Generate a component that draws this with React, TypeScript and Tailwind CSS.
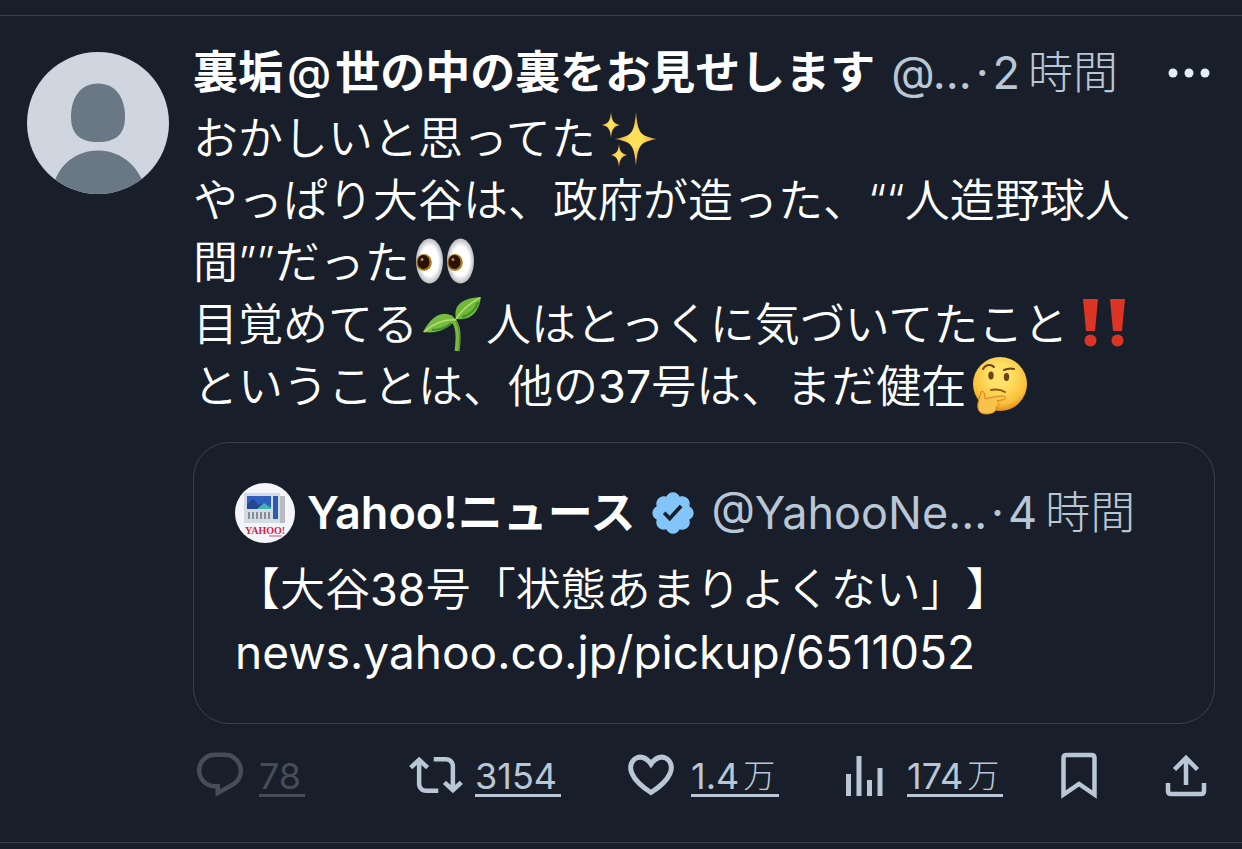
import type { ReactNode } from "react"

type Action = {
  label: string
  icon: ReactNode
  count?: string
  unit?: string
  disabled?: boolean
}

function DefaultAvatar() {
  return (
    <svg viewBox="0 0 142 142" className="w-[142px] h-[142px] shrink-0 rounded-full" role="img" aria-label="プロフィール画像">
      <rect width="142" height="142" fill="#cfd6df" />
      <path d="M71 31.500c18 0 27 14.500 27 33.500 0 18-10 25-27 25s-27-7-27-25c0-19 9-33.500 27-33.500z" fill="#6a7784" />
      <path d="M25 142c2-26 22-43.500 46-43.500s44 17.500 48 43.500z" fill="#6a7784" />
    </svg>
  )
}

function YahooAvatar() {
  return (
    <svg viewBox="0 0 60 60" className="w-[60px] h-[60px] shrink-0 rounded-full" role="img" aria-label="Yahoo!ニュース">
      <rect width="60" height="60" fill="#f4f5f8" />
      <path d="M43 13h7v27h-7z" fill="#b9bbc0" />
      <path d="M9 10h36v30H9z" fill="#d5dbe2" />
      <path d="M12 13h24v13H12z" fill="#2f5fc0" />
      <path d="M12 26v-5l6-5 6 6 3-2v6z" fill="#24488f" />
      <path d="M22 26l7-6 7 5v1z" fill="#3fb5b0" />
      <path d="M38 13h5v23h-5z" fill="#2c5cae" />
      <path d="M14 29v7M18 29v7M22 29v7M26 29v7M30 29v7M34 29v7" stroke="#8b8f98" strokeWidth="2" />
      <text x="30" y="51" textAnchor="middle" fontSize="10" fontWeight="700" fontFamily="Liberation Serif, serif" fill="#cf2547">
        YAHOO!
      </text>
      <path d="M34 53h13" stroke="#dc8797" strokeWidth="1.500" />
    </svg>
  )
}

function VerifiedBadge() {
  return (
    <svg viewBox="1 1 20 20" className="w-11 h-11 shrink-0" role="img" aria-label="認証済みアカウント">
      <path
        fill="#83c5f8"
        d="M20.396 11c-.018-.646-.215-1.275-.57-1.816-.354-.54-.852-.972-1.438-1.246.223-.607.27-1.264.14-1.897-.131-.634-.437-1.218-.882-1.687-.47-.445-1.053-.75-1.687-.882-.633-.13-1.29-.083-1.897.14-.273-.587-.704-1.086-1.245-1.44S11.647 1.62 11 1.604c-.646.017-1.273.213-1.813.568s-.969.854-1.24 1.44c-.608-.223-1.267-.272-1.902-.14-.635.13-1.22.436-1.69.882-.445.47-.749 1.055-.878 1.688-.13.633-.08 1.29.144 1.896-.587.274-1.087.705-1.443 1.245-.356.54-.555 1.17-.574 1.817.02.647.218 1.276.574 1.817.356.54.856.972 1.443 1.245-.224.606-.274 1.263-.144 1.896.13.634.433 1.218.877 1.688.47.443 1.054.747 1.687.878.633.132 1.29.084 1.897-.136.274.586.705 1.084 1.246 1.439.54.354 1.17.551 1.816.569.647-.016 1.276-.213 1.817-.567s.972-.854 1.245-1.44c.604.239 1.266.296 1.903.164.636-.132 1.22-.447 1.68-.907.46-.46.776-1.044.908-1.681s.075-1.299-.165-1.903c.586-.274 1.084-.705 1.439-1.246.354-.54.551-1.17.569-1.816z"
      />
      <path d="M7 10.900l2.500 2.600 5.200-5.700" fill="none" stroke="#181f2a" strokeWidth="1.700" />
    </svg>
  )
}

function Sparkles() {
  return (
    <svg viewBox="0 0 60 60" className="inline-block w-[60px] h-[60px] ml-1 -mt-4 -mb-1 align-middle" role="img" aria-label="✨">
      <defs>
        <radialGradient id="spark">
          <stop offset="0.3" stopColor="#fddf5a" />
          <stop offset="0.65" stopColor="#f3bd4c" />
          <stop offset="1" stopColor="#d9803f" />
        </radialGradient>
      </defs>
      <g fill="url(#spark)">
        <path d="M36 5c2 20 3 24 21 27-18 3-19 7-21 27-2-20-3-24-21-27 18-3 19-7 21-27z" />
        <path d="M11 5c1 9 2 11 9 13-7 2-8 4-9 13-1-9-2-11-9-13 7-2 8-4 9-13z" />
        <path d="M19 37c1 8 2 9 8 11-6 2-7 4-8 12-1-8-2-10-8-12 6-2 7-3 8-11z" />
      </g>
    </svg>
  )
}

function Eyes() {
  return (
    <svg viewBox="0 0 60 60" className="inline-block w-[60px] h-[60px] ml-1 -mt-4 -mb-1 align-middle" role="img" aria-label="👀">
      <defs>
        <radialGradient id="eyeball">
          <stop offset="0.65" stopColor="#ffffff" />
          <stop offset="1" stopColor="#b9babd" />
        </radialGradient>
      </defs>
      {[0, 31].map((x) => (
        <g key={x} transform={`translate(${x} 0)`}>
          <ellipse cx="15.500" cy="30" rx="13.500" ry="22.500" fill="url(#eyeball)" />
          <ellipse cx="10" cy="31.500" rx="7.800" ry="8.500" fill="#a97a1d" />
          <ellipse cx="9.500" cy="31" rx="6" ry="7" fill="#2b1207" />
          <circle cx="8" cy="28.500" r="1.500" fill="#a08e80" />
        </g>
      ))}
    </svg>
  )
}

function Seedling() {
  return (
    <svg viewBox="0 0 60 60" className="inline-block w-[60px] h-[60px] mx-1 -mt-4 -mb-1 align-middle" role="img" aria-label="🌱">
      <path d="M31 27c5 5 6 17 4 31" fill="none" stroke="#7fb63e" strokeWidth="5" />
      <path d="M33.500 28c4 7 5 17 3 30" fill="none" stroke="#4d8f2e" strokeWidth="1" />
      <path d="M34 26c-3-13 5-21 25-22-2 15-10 24-25 22z" fill="#6fb83a" />
      <path d="M34 27C27 17 12 18 1 39c15 2 24-3 33-12z" fill="#78bb3f" />
      <path d="M34 26c6-9 13-16 24-21M34 27C22 26 12 30 2 39" fill="none" stroke="#b5dd70" strokeWidth="1.500" />
      <path d="M40 24c8-2 14-8 16-15M10 37c8 0 15-3 19-7" fill="none" stroke="#3f8e30" strokeWidth="2" />
    </svg>
  )
}

function DoubleBang() {
  return (
    <svg viewBox="0 0 60 60" className="inline-block w-[60px] h-[60px] ml-1 -mt-4 -mb-1 align-middle" role="img" aria-label="‼️">
      <g fill="#dc3525">
        <path d="M11 6h15l-3 32h-9zM38 6h15l-3 32h-9z" />
        <circle cx="18.500" cy="47.500" r="6" />
        <circle cx="45.500" cy="47.500" r="6" />
      </g>
    </svg>
  )
}

function Thinking() {
  return (
    <svg viewBox="0 0 60 60" className="inline-block w-[60px] h-[60px] ml-1 -mt-4 -mb-1 align-middle" role="img" aria-label="🤔">
      <defs>
        <radialGradient id="face" cx="0.500" cy="0.350" r="0.650">
          <stop offset="0.300" stopColor="#fee268" />
          <stop offset="0.800" stopColor="#fabf39" />
          <stop offset="1" stopColor="#e08b1e" />
        </radialGradient>
      </defs>
      <circle cx="30" cy="29" r="27" fill="url(#face)" />
      <path d="M13 14c3-5 8-5 11-2M34 15c4-2 7-2 10-1" fill="none" stroke="#6b431b" strokeWidth="2" strokeLinecap="round" />
      <ellipse cx="21" cy="20.500" rx="2.700" ry="4" fill="#6b431b" />
      <ellipse cx="36.500" cy="22" rx="2.700" ry="4" fill="#6b431b" />
      <path d="M21 35c5-1 9-1 14 2" fill="none" stroke="#8d5516" strokeWidth="2" strokeLinecap="round" />
      <path
        d="M11 37c3-2 4 2 4 7 5-1 11-3 18-3 4 0 3 4-1 4l-5 1c3 2 2 5-1 6 1 5-4 7-10 7-7 0-9-5-8-11z"
        fill="#f9c24a"
        stroke="#d18420"
      />
    </svg>
  )
}

function ReplyIcon() {
  return (
    <svg viewBox="0 0 24 24" className="w-[54px] h-[54px]" fill="currentColor" aria-hidden="true">
      <path d="M1.751 10c0-4.420 3.584-8 8.005-8h4.366c4.490 0 8.129 3.640 8.129 8.130 0 2.960-1.607 5.680-4.196 7.110l-8.054 4.460v-3.690h-.067c-4.490.1-8.183-3.510-8.183-8.010zm8.005-6c-3.317 0-6.005 2.690-6.005 6 0 3.370 2.770 6.080 6.138 6.010l.351-.010h1.761v2.300l5.087-2.810c1.951-1.080 3.163-3.130 3.163-5.360 0-3.390-2.744-6.130-6.129-6.130H9.756z" />
    </svg>
  )
}

function RepostIcon() {
  return (
    <svg viewBox="0 0 24 24" className="w-[54px] h-[54px]" fill="currentColor" aria-hidden="true">
      <path d="M4.500 3.880l4.432 4.140-1.364 1.460L5.500 7.550V16c0 1.100.896 2 2 2H13v2H7.500c-2.209 0-4-1.790-4-4V7.550L1.432 9.480.068 8.020 4.500 3.880zM16.500 6H11V4h5.500c2.209 0 4 1.790 4 4v8.450l2.068-1.930 1.364 1.460-4.432 4.140-4.432-4.140 1.364-1.460 2.068 1.930V8c0-1.100-.896-2-2-2z" />
    </svg>
  )
}

function LikeIcon() {
  return (
    <svg viewBox="0 0 54 54" className="w-[54px] h-[54px]" fill="none" stroke="currentColor" strokeWidth="5" aria-hidden="true">
      <path d="M26 16C21 8.500 14.500 8 10.500 10.500c-5 3.300-6 9.500-3.500 15C10 32.500 16.500 38.500 26 44.500c9.500-6 16-12 19-19 2.500-5.500 1.500-11.700-3.500-15C37.500 8 31 8.500 26 16z" />
    </svg>
  )
}

function ViewsIcon() {
  return (
    <svg viewBox="0 0 54 54" className="w-[54px] h-[54px]" fill="currentColor" aria-hidden="true">
      <path d="M5 26h5v22H5zM15.500 8h5v40h-5zM26 32h5v16h-5zM36.500 20h5v28h-5z" />
    </svg>
  )
}

function BookmarkIcon() {
  return (
    <svg viewBox="0 0 42 54" className="w-[42px] h-[54px]" fill="none" stroke="currentColor" strokeWidth="4.500" aria-hidden="true">
      <path d="M6.500 46.500V10q0-3 3-3h25q3 0 3 3v36.500L22 36z" />
    </svg>
  )
}

function ShareIcon() {
  return (
    <svg viewBox="0 0 42 54" className="w-[42px] h-[54px]" fill="none" stroke="currentColor" strokeWidth="4.500" aria-hidden="true">
      <path d="M21 37V10M9.500 21.500L21 10 32.500 21.500M3 35v8q0 3 3 3h30q3 0 3-3v-8" />
    </svg>
  )
}

const actions: Action[] = [
  { label: "返信", icon: <ReplyIcon />, count: "78", disabled: true },
  { label: "リポスト", icon: <RepostIcon />, count: "3154" },
  { label: "いいね", icon: <LikeIcon />, count: "1.4", unit: "万" },
  { label: "表示", icon: <ViewsIcon />, count: "174", unit: "万" },
  { label: "ブックマーク", icon: <BookmarkIcon /> },
  { label: "共有", icon: <ShareIcon /> },
]

function QuotedPost() {
  return (
    <section className="mt-6 rounded-[36px] border border-[#39414d] px-[41px] py-10">
      <div className="flex items-center leading-[60px] whitespace-nowrap">
        <YahooAvatar />
        <span className="ml-3 font-semibold">Yahoo!ニュース</span>
        <span className="ml-4 flex">
          <VerifiedBadge />
        </span>
        <span className="ml-4 text-[#b9c6d5]">@YahooNe...</span>
        <span className="mx-1 text-[#b9c6d5]">·</span>
        <time className="flex gap-2 text-[#b9c6d5]">
          4<span className="font-light">時間</span>
        </time>
      </div>
      <p className="mt-4 font-[350]">
        【大谷<span className="font-normal">38</span>号「状態あまりよくない」】
      </p>
      <a href="#pickup" className="block w-fit text-[46px]">
        news.yahoo.co.jp/pickup/6511052
      </a>
    </section>
  )
}

export default function App() {
  return (
    <main className="min-h-screen bg-[#181f2a] pt-[15px] text-white">
      <article
        lang="ja"
        className="flex items-start gap-6 border-y border-[#39414d] pt-[26px] pr-[27px] pb-10 pl-[27px] font-['Inter','Noto_Sans_CJK_JP',sans-serif] text-[45px] leading-[62px] [text-spacing-trim:space-all]"
      >
        <div className="pt-[10px]">
          <DefaultAvatar />
        </div>
        <div className="min-w-0 flex-1">
          <header className="flex items-center whitespace-nowrap">
            <h1 className="flex gap-1 font-bold">
              裏垢<span className="font-medium">@</span>世の中の裏をお見せします
            </h1>
            <span className="ml-4 text-[#b9c6d5]">@...</span>
            <span className="mx-1 text-[#b9c6d5]">·</span>
            <time className="flex gap-2 text-[#b9c6d5]">
              2<span className="font-light">時間</span>
            </time>
            <button type="button" aria-label="もっと見る" className="mr-1 ml-auto">
              <svg viewBox="0 0 44 44" className="w-11 h-11" fill="#e2effb" aria-hidden="true">
                <circle cx="6" cy="22" r="4.500" />
                <circle cx="22" cy="22" r="4.500" />
                <circle cx="38" cy="22" r="4.500" />
              </svg>
            </button>
          </header>

          <div className="mt-1 font-[350]">
            <p>
              おかしいと思ってた
              <Sparkles />
            </p>
            <p>
              やっぱり大谷は、政府が造った、““人造野球人間””だった
              <Eyes />
            </p>
            <p>
              目覚めてる
              <Seedling />
              人はとっくに気づいてたこと
              <DoubleBang />
            </p>
            <p>
              ということは、他の<span className="font-normal">37</span>号は、まだ健在
              <Thinking />
            </p>
          </div>

          <QuotedPost />

          <div className="mt-6 grid grid-cols-[2fr_2fr_2fr_2fr_1fr_auto] pr-2 text-4xl leading-9 text-[#b9c6d5]">
            {actions.map((action) => (
              <button
                key={action.label}
                type="button"
                aria-label={action.label}
                disabled={action.disabled}
                className="flex items-center gap-3 whitespace-nowrap disabled:text-[#464d59]"
              >
                {action.icon}
                {action.count && (
                  <span className="flex gap-1 border-b-3 border-current pt-1 pr-1">
                    {action.count}
                    {action.unit && <span className="text-[32px] font-light">{action.unit}</span>}
                  </span>
                )}
              </button>
            ))}
          </div>
        </div>
      </article>
    </main>
  )
}
